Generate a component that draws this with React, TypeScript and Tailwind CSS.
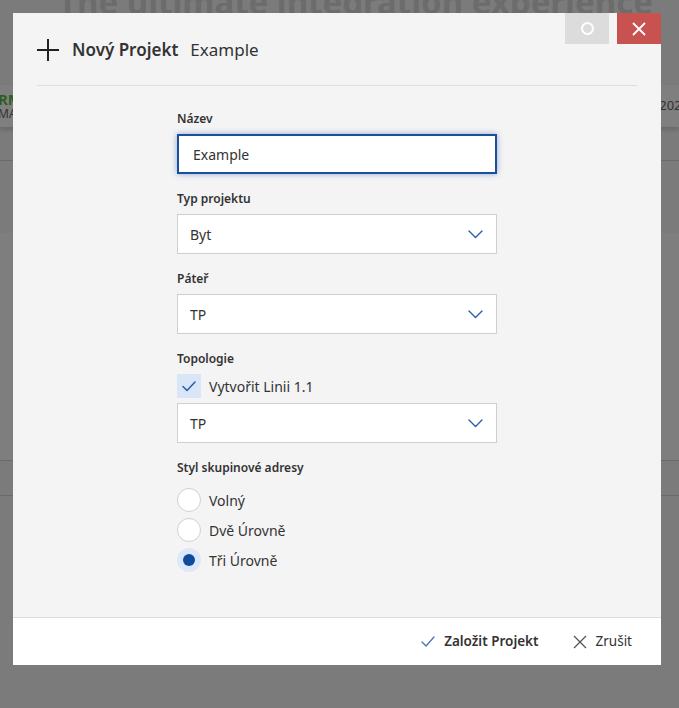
import React from "react";

const font = { fontFamily: '"Noto Sans", "Open Sans", sans-serif' };

function Chevron() {
  return (
    <svg width="15" height="9" viewBox="0 0 15 9" fill="none" stroke="#2a5caa" strokeWidth="1.4" strokeLinecap="round" strokeLinejoin="round">
      <path d="M1 1l6.5 6.5L14 1" />
    </svg>
  );
}

function Select({ value }: { value: string }) {
  return (
    <div className="flex h-10 items-center justify-between border border-[#cfcfcf] bg-white pl-3 pr-[13px] text-[14px] text-[#333]">
      <span>{value}</span>
      <Chevron />
    </div>
  );
}

function Label({ children }: { children: React.ReactNode }) {
  return <div className="mb-[7px] h-4 text-[12px] font-semibold leading-4 text-[#333]">{children}</div>;
}

function Radio({ label, checked }: { label: string; checked?: boolean }) {
  return (
    <div className="flex h-6 items-center gap-2">
      {checked ? (
        <div className="flex h-6 w-6 items-center justify-center rounded-full bg-[#dde8f8]">
          <div className="h-3 w-3 rounded-full bg-[#0f4c9e]" />
        </div>
      ) : (
        <div className="h-6 w-6 rounded-full border border-[#d0d0d0] bg-white" />
      )}
      <span className="text-[14px] text-[#333]">{label}</span>
    </div>
  );
}

export default function App() {
  return (
    <div className="relative h-[708px] w-[679px] overflow-hidden bg-[#7b7b7b]" style={font}>
      {/* dimmed app behind the dialog */}
      <div className="flex flex-col">
        <div className="-mt-[18px] h-[103px] whitespace-nowrap pl-[58px] text-[33px] font-bold leading-[40px] text-[#6c6c6c]">
          The ultimate integration experience
        </div>
        <div className="flex h-[42px] items-center justify-between bg-[#7f7f7f] shadow-[0_3px_4px_rgba(0,0,0,0.15)]">
          <div className="-ml-[2px] flex flex-col">
            <span className="text-[15px] font-bold leading-[16px] text-[#2f5d1f]">RM</span>
            <span className="text-[12px] leading-[14px] text-[#333]">MA</span>
          </div>
          <span className="-mr-[10px] text-[13px] text-[#333]">2024</span>
        </div>
        <div className="mt-[33px] border-t border-[#6a6a6a]" />
        <div className="mt-[72px] h-[227px] bg-[#7e7e7e]" />
        <div className="border-t border-[#6a6a6a]" />
        <div className="mt-[34px] border-t border-[#6a6a6a]" />
      </div>

      {/* dialog */}
      <div className="absolute left-[13px] top-[13px] flex h-[652px] w-[648px] flex-col bg-[#f4f4f4]">
        <div className="flex justify-end gap-2">
          <button className="flex h-[31px] w-[44px] items-center justify-center bg-[#dcdcdc]">
            <div className="h-[13px] w-[13px] rounded-full border-2 border-white" />
          </button>
          <button className="flex h-[31px] w-[44px] items-center justify-center bg-[#c85250]">
            <svg width="14" height="14" viewBox="0 0 14 14" stroke="white" strokeWidth="1.8">
              <path d="M1 1l12 12M13 1 1 13" />
            </svg>
          </button>
        </div>

        <div className="mx-6 flex h-[42px] items-start border-b border-[#dedede]">
          <div className="flex items-center gap-[13px] -mt-[7px]">
            <svg width="22" height="22" viewBox="0 0 22 22" stroke="#222" strokeWidth="2">
              <path d="M11 0v22M0 11h22" />
            </svg>
            <div className="flex items-baseline gap-3 text-[17px] text-[#333]">
              <span className="font-semibold">Nový Projekt</span>
              <span>Example</span>
            </div>
          </div>
        </div>

        <div className="flex flex-1 justify-center pt-[25px]">
          <div className="flex w-[320px] flex-col">
            <Label>Název</Label>
            <div className="flex h-10 items-center border-2 border-[#1a4f9f] bg-white pl-[14px] text-[14px] text-[#333] shadow-[0_0_6px_rgba(26,79,159,0.45)]">
              Example
            </div>

            <div className="mt-[17px]">
              <Label>Typ projektu</Label>
              <Select value="Byt" />
            </div>

            <div className="mt-[17px]">
              <Label>Páteř</Label>
              <Select value="TP" />
            </div>

            <div className="mt-[17px]">
              <Label>Topologie</Label>
              <div className="flex h-6 items-center gap-2">
                <div className="flex h-6 w-6 items-center justify-center bg-[#d8e6f8]">
                  <svg width="14" height="11" viewBox="0 0 14 11" fill="none" stroke="#2a5caa" strokeWidth="1.5" strokeLinecap="round" strokeLinejoin="round">
                    <path d="M1 5.5l4 4L13 1" />
                  </svg>
                </div>
                <span className="text-[14px] text-[#333]">Vytvořit Linii 1.1</span>
              </div>
              <div className="mt-[5px]">
                <Select value="TP" />
              </div>
            </div>

            <div className="mt-[17px]">
              <Label>Styl skupinové adresy</Label>
              <div className="mt-[12px] flex flex-col gap-[6px]">
                <Radio label="Volný" />
                <Radio label="Dvě Úrovně" />
                <Radio label="Tři Úrovně" checked />
              </div>
            </div>
          </div>
        </div>

        <div className="flex h-[48px] items-center justify-end gap-[34px] border-t border-[#dcdcdc] bg-white pr-[29px] text-[13.5px] text-[#333]">
          <div className="flex items-center gap-[9px]">
            <svg width="14" height="11" viewBox="0 0 14 11" fill="none" stroke="#4a78c0" strokeWidth="1.4" strokeLinecap="round" strokeLinejoin="round">
              <path d="M1 6l4 4L13 1" />
            </svg>
            <span className="font-semibold">Založit Projekt</span>
          </div>
          <div className="flex items-center gap-[9px]">
            <svg width="14" height="14" viewBox="0 0 14 14" stroke="#555" strokeWidth="1.3">
              <path d="M1 1l12 12M13 1 1 13" />
            </svg>
            <span>Zrušit</span>
          </div>
        </div>
      </div>
    </div>
  );
}
